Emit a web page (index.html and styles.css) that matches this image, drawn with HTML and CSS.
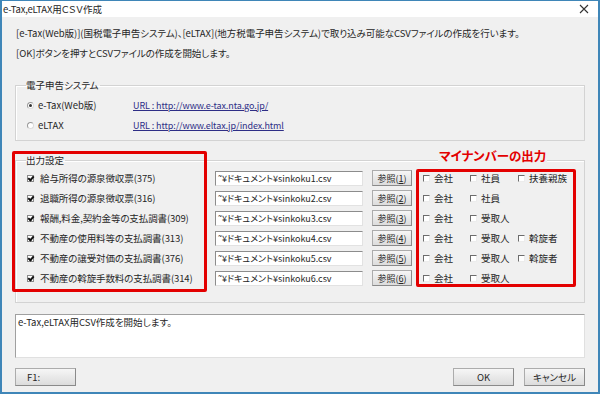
FILE: index.html
```html
<!DOCTYPE html>
<html lang="ja">
<head>
<meta charset="utf-8">
<link rel="stylesheet" href="styles.css">
</head>
<body>
<div class="window">
  <div class="titlebar">
    <span class="title">e-Tax,eLTAX用ＣＳＶ作成</span>
    <svg class="close" width="10" height="10" viewBox="0 0 10 10"><path d="M1 1L9 9M9 1L1 9" stroke="#333" stroke-width="1.1" fill="none"/></svg>
  </div>
  <div class="content">
    <div class="intro">
      <p class="line">[e-Tax(Web版)](国税電子申告システム)、[eLTAX](地方税電子申告システム)で取り込み可能なCSVファイルの作成を行います。</p>
      <p class="line">[OK]ボタンを押すとCSVファイルの作成を開始します。</p>
    </div>

    <fieldset class="group group-sys">
      <legend>電子申告システム</legend>
      <div class="radio-row">
        <span class="radio on"></span><span class="rlabel">e-Tax(Web版)</span>
        <a class="url">URL : http://www.e-tax.nta.go.jp/</a>
      </div>
      <div class="radio-row">
        <span class="radio"></span><span class="rlabel">eLTAX</span>
        <a class="url">URL : http://www.eltax.jp/index.html</a>
      </div>
    </fieldset>

    <div class="out-wrap">
      <fieldset class="group group-out">
        <legend>出力設定</legend>
        <div class="out-row">
          <div class="c1"><span class="chk on"></span><span>給与所得の源泉徴収票(375)</span></div>
          <div class="path">˜¥ドキュメント¥sinkoku1.csv</div>
          <div class="btn ref">参照(<u>1</u>)</div>
          <div class="mc"><span class="chk"></span>会社</div>
          <div class="mc"><span class="chk"></span>社員</div>
          <div class="mc"><span class="chk"></span>扶養親族</div>
        </div>
        <div class="out-row">
          <div class="c1"><span class="chk on"></span><span>退職所得の源泉徴収票(316)</span></div>
          <div class="path">˜¥ドキュメント¥sinkoku2.csv</div>
          <div class="btn ref">参照(<u>2</u>)</div>
          <div class="mc"><span class="chk"></span>会社</div>
          <div class="mc"><span class="chk"></span>社員</div>
        </div>
        <div class="out-row">
          <div class="c1"><span class="chk on"></span><span>報酬,料金,契約金等の支払調書(309)</span></div>
          <div class="path">˜¥ドキュメント¥sinkoku3.csv</div>
          <div class="btn ref">参照(<u>3</u>)</div>
          <div class="mc"><span class="chk"></span>会社</div>
          <div class="mc"><span class="chk"></span>受取人</div>
        </div>
        <div class="out-row">
          <div class="c1"><span class="chk on"></span><span>不動産の使用料等の支払調書(313)</span></div>
          <div class="path">˜¥ドキュメント¥sinkoku4.csv</div>
          <div class="btn ref">参照(<u>4</u>)</div>
          <div class="mc"><span class="chk"></span>会社</div>
          <div class="mc"><span class="chk"></span>受取人</div>
          <div class="mc"><span class="chk"></span>斡旋者</div>
        </div>
        <div class="out-row">
          <div class="c1"><span class="chk on"></span><span>不動産の譲受対価の支払調書(376)</span></div>
          <div class="path">˜¥ドキュメント¥sinkoku5.csv</div>
          <div class="btn ref">参照(<u>5</u>)</div>
          <div class="mc"><span class="chk"></span>会社</div>
          <div class="mc"><span class="chk"></span>受取人</div>
          <div class="mc"><span class="chk"></span>斡旋者</div>
        </div>
        <div class="out-row">
          <div class="c1"><span class="chk on"></span><span>不動産の斡旋手数料の支払調書(314)</span></div>
          <div class="path">˜¥ドキュメント¥sinkoku6.csv</div>
          <div class="btn ref">参照(<u>6</u>)</div>
          <div class="mc"><span class="chk"></span>会社</div>
          <div class="mc"><span class="chk"></span>受取人</div>
        </div>
      </fieldset>
      <div class="redbox red-left"></div>
      <div class="redbox red-right"></div>
      <div class="mynum">マイナンバーの出力</div>
    </div>

    <div class="msg">e-Tax,eLTAX用CSV作成を開始します。</div>

    <div class="footer">
      <div class="btn big f1">F1:</div>
      <div class="spacer"></div>
      <div class="btn big">OK</div>
      <div class="btn big">キャンセル</div>
    </div>
  </div>
</div>
</body>
</html>
```

FILE: styles.css
```css
* { box-sizing: border-box; }
html, body { margin: 0; padding: 0; }
body {
  font-family: "Noto Sans CJK JP", "Noto Sans", sans-serif;
  font-feature-settings: "palt";
  font-size: 9.5px;
  color: #262626;
  background: #fff;
}
.window {
  width: 600px;
  height: 394px;
  border: 2px solid #3f86b8;
  border-top-width: 1px;
  background: #f0f0f0;
  display: flex;
  flex-direction: column;
}
.titlebar {
  height: 16px;
  background: #fff;
  display: flex;
  align-items: center;
  justify-content: space-between;
  padding: 0 9px 0 1px;
  flex: none;
}
.title { font-size: 9.5px; letter-spacing: -0.2px; }
.close { display: block; }
.content {
  flex: 1;
  padding: 0 13px 0 13px;
  display: flex;
  flex-direction: column;
}
.intro { margin-top: 6px; }
.line { margin: 0; height: 20px; line-height: 20px; padding-left: 1px; white-space: nowrap; letter-spacing: -0.05px; }

.group {
  margin: 0;
  border: 1px solid #d3d3d3;
  box-shadow: inset 1px 1px 0 #fff;
  padding: 0;
  min-width: 0;
}
.group legend {
  padding: 0 1px 0 0;
  margin-left: -1px;
  line-height: 12px;
  height: 12px;
  font-size: 9.5px;
}
.group-sys {
  margin-top: 16px;
  height: 62px;
  padding: 4px 0 0 11px;
}
.radio-row {
  height: 20px;
  display: flex;
  align-items: center;
}
.radio {
  width: 7px; height: 7px;
  border-radius: 50%;
  border: 1px solid #9a9a9a;
  border-right-color: #dcdcdc;
  border-bottom-color: #dcdcdc;
  background: #fff;
  position: relative;
  flex: none;
}
.radio.on::after {
  content: "";
  position: absolute;
  left: 1px; top: 1px;
  width: 3px; height: 3px;
  border-radius: 50%;
  background: #333;
}
.rlabel { margin-left: 4px; width: 95px; }
.url { color: #2e2e86; text-decoration: underline; font-size: 9px; letter-spacing: -0.1px; }

.out-wrap { position: relative; margin-top: 13px; }
.group-out {
  height: 149px;
  padding: 2px 0 0 11px;
}
.out-row {
  height: 20px;
  display: flex;
  align-items: center;
}
.chk {
  width: 7px; height: 7px;
  border: 1px solid #ececec;
  border-top-color: #6c6c6c;
  border-left-color: #6c6c6c;
  background: #fff;
  flex: none;
  position: relative;
}
.chk.on {
  border-color: #8a8a8a;
}
.chk.on::after {
  content: "";
  position: absolute;
  left: 1px; top: -1px;
  width: 2px; height: 4px;
  border: solid #111;
  border-width: 0 2px 2px 0;
  transform: rotate(40deg);
}
.c1 {
  width: 188px;
  display: flex;
  align-items: center;
  gap: 6px;
  white-space: nowrap;
  letter-spacing: -0.1px;
}
.path {
  width: 148px;
  height: 15px;
  line-height: 13px;
  background: #fff;
  border: 1px solid #e2e2e2;
  border-top-color: #8c8c8c;
  border-left-color: #8c8c8c;
  padding-left: 2px;
  font-size: 9px;
  white-space: nowrap;
  overflow: hidden;
}
.btn {
  border: 1px solid #acacac;
  border-right-color: #8a8a8a;
  border-bottom-color: #8a8a8a;
  background: linear-gradient(#f6f6f6, #dcdcdc);
  display: flex;
  align-items: center;
  justify-content: center;
  white-space: nowrap;
}
.ref {
  width: 40px;
  height: 16px;
  margin-left: 9px;
  margin-right: 11px;
  font-size: 9px;
}
.mc {
  width: 47px;
  display: flex;
  align-items: center;
  gap: 4px;
  white-space: nowrap;
}
.mc + .mc { width: 48px; }

.redbox {
  position: absolute;
  border: 3px solid #e30000;
  border-radius: 2px;
}
.red-left { left: -3px; top: -3px; width: 195px; height: 141px; }
.red-right { left: 401px; top: 15px; width: 160px; height: 118px; }
.mynum {
  position: absolute;
  left: 423px;
  top: -6px;
  color: #e30000;
  font-weight: bold;
  font-size: 12.5px;
  line-height: 16px;
  background: #f0f0f0;
  padding: 0 1px;
}

.msg {
  margin-top: 11px;
  height: 44px;
  background: #fff;
  border: 1px solid #e0e0e0;
  border-top-color: #a0a0a0;
  border-left-color: #a0a0a0;
  padding: 1px 0 0 2px;
  line-height: 12px;
}

.footer {
  margin-top: 10px;
  display: flex;
  height: 18px;
  gap: 10px;
}
.big { width: 61px; height: 18px; }
.f1 { justify-content: flex-start; padding-left: 11px; }
.spacer { flex: 1; }
```
